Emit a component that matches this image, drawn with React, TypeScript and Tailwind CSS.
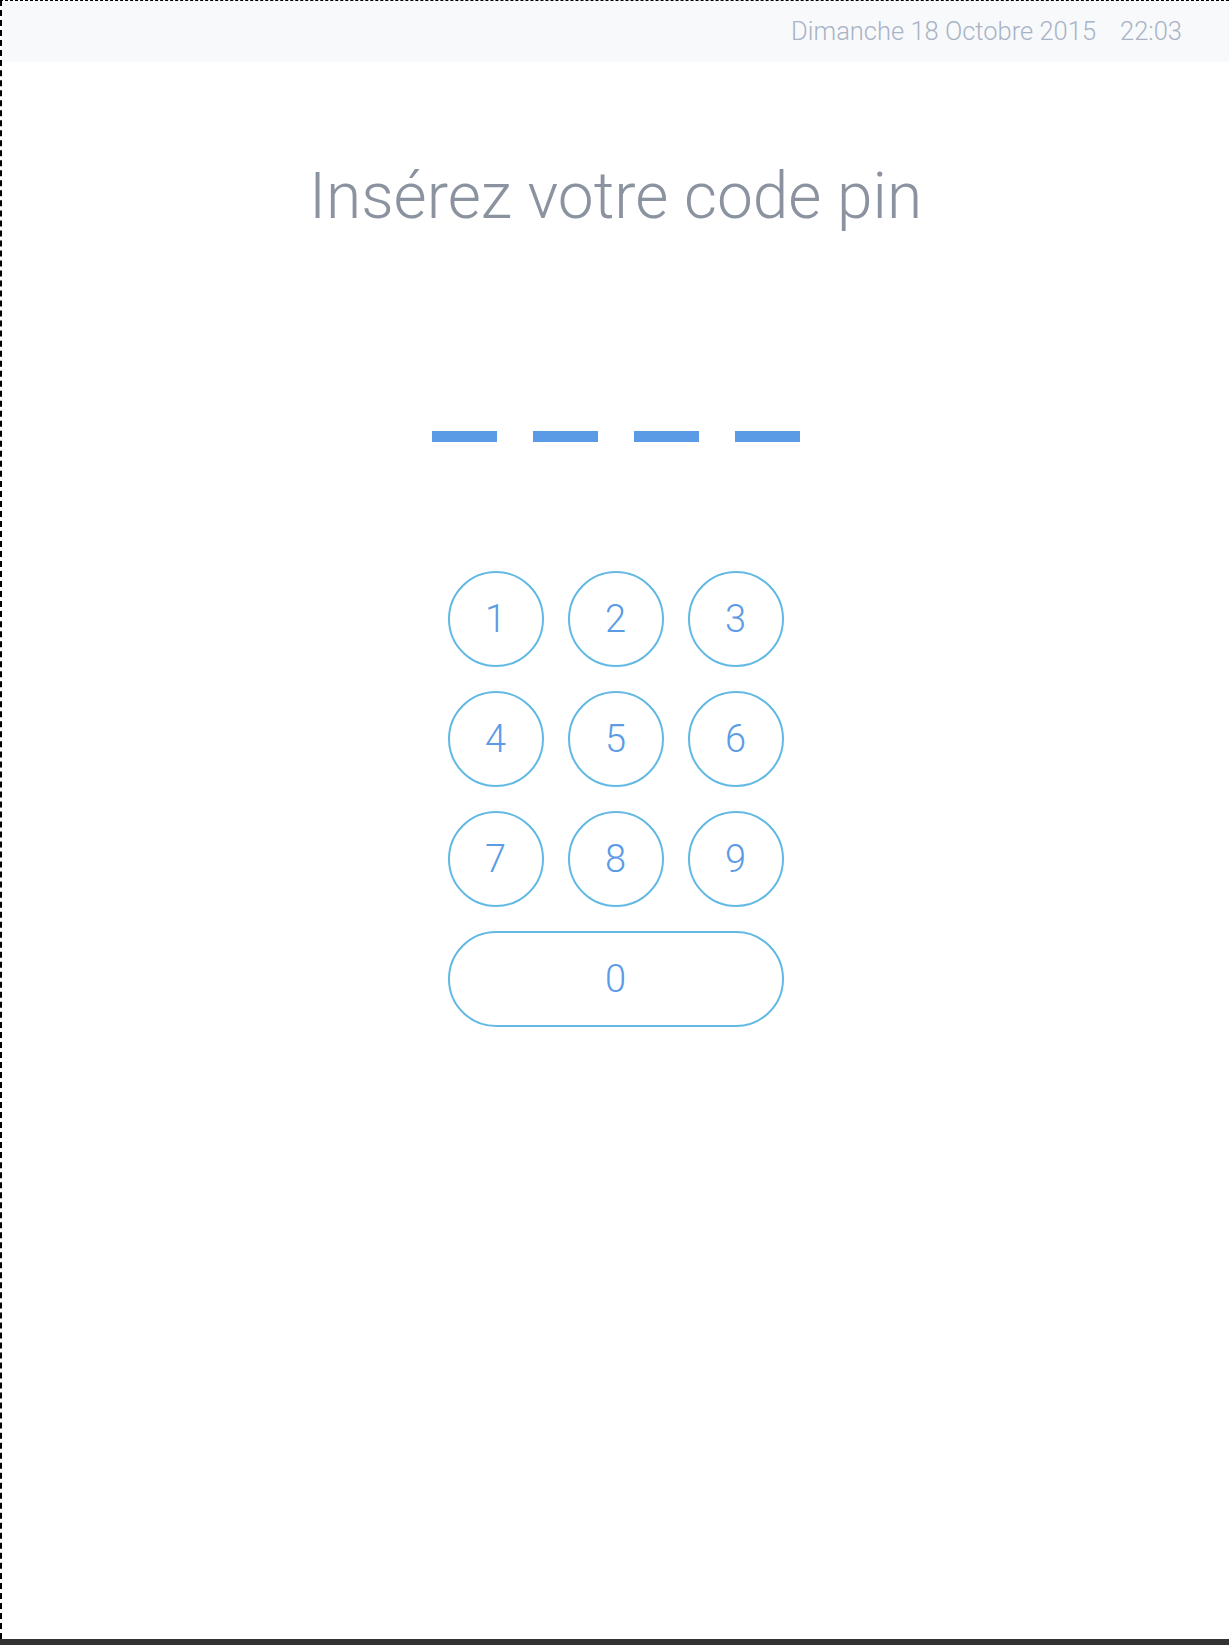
import React from "react";

const keys = ["1", "2", "3", "4", "5", "6", "7", "8", "9"];

const Key = (props: { label: string; wide?: boolean }) => {
  return (
    <button
      className={
        (props.wide ? "col-span-3 w-[336px]" : "w-[96px]") +
        " h-[96px] rounded-full border-2 border-[#62b9e4] bg-white flex items-center justify-center text-[38px] font-light text-[#5b9be6] leading-none"
      }
    >
      {props.label}
    </button>
  );
};

export default function App() {
  return (
    <div
      className="w-[1229px] h-[1645px] flex flex-col bg-white"
      style={{ fontFamily: "Roboto, 'Liberation Sans', sans-serif" }}
    >
      <div className="flex-1 flex flex-col border-t border-l-2 border-dashed border-black">
        <header className="h-[61px] bg-[#f8f9fb] flex items-center justify-end pr-[47px] gap-[24px] text-[25.5px] font-light text-[#a9b3c6]">
          <span>Dimanche 18 Octobre 2015</span>
          <span>22:03</span>
        </header>

        <main className="flex flex-col items-center">
          <h1 className="mt-[103px] text-[64px] font-light leading-none text-[#8a939f]">
            Insérez votre code pin
          </h1>

          <div className="mt-[202px] flex gap-[36px]">
            <span className="w-[65px] h-[11px] bg-[#5b9be6]"></span>
            <span className="w-[65px] h-[11px] bg-[#5b9be6]"></span>
            <span className="w-[65px] h-[11px] bg-[#5b9be6]"></span>
            <span className="w-[65px] h-[11px] bg-[#5b9be6]"></span>
          </div>

          <div className="mt-[129px] grid grid-cols-3 gap-[24px]">
            {keys.map((k) => (
              <Key key={k} label={k} />
            ))}
            <Key label="0" wide />
          </div>
        </main>
      </div>
      <div className="h-[6px] bg-[#333333]"></div>
    </div>
  );
}
